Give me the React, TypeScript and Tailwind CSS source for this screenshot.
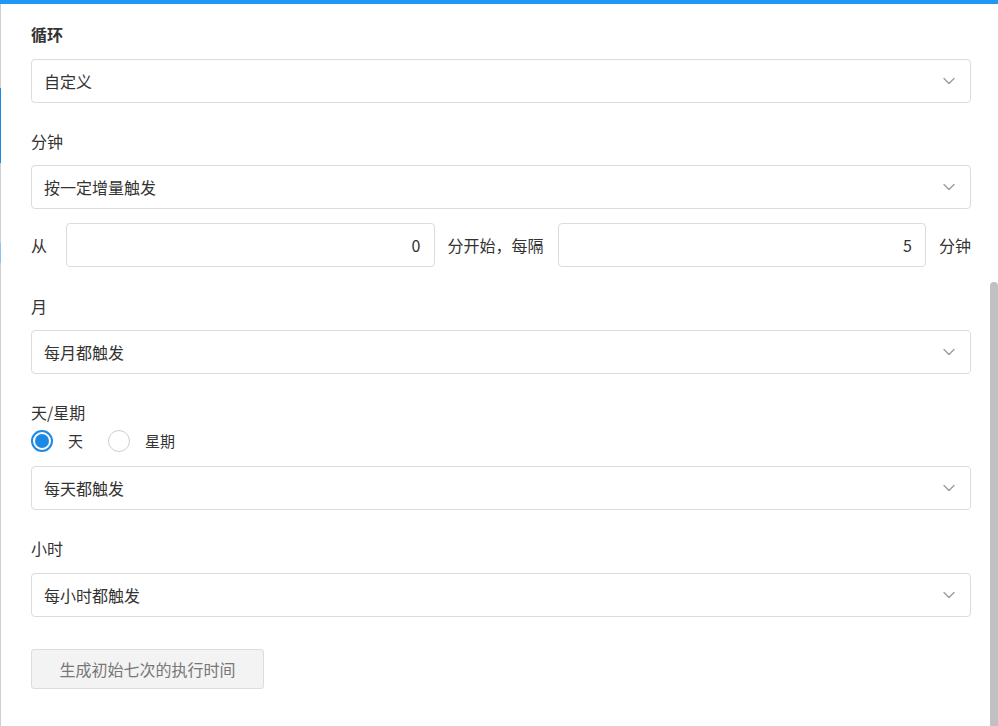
import React from "react";

const font = { fontFamily: '"Microsoft YaHei", "Noto Sans CJK SC", "Noto Sans", sans-serif' };

function Chevron(): React.ReactElement {
  return (
    <svg width="12" height="8" viewBox="0 0 12 8" fill="none" className="shrink-0">
      <path d="M1 1.5 L6 6.5 L11 1.5" stroke="#9a9a9a" strokeWidth="1.3" strokeLinecap="round" strokeLinejoin="round" />
    </svg>
  );
}

function Select({ value }: { value: string }): React.ReactElement {
  return (
    <div className="flex h-[44px] items-center justify-between rounded-[4px] border border-[#dcdcdc] bg-white pl-[12px] pr-[15px] text-[16px] text-[#333]">
      <span>{value}</span>
      <Chevron />
    </div>
  );
}

function Label({ children, bold }: { children: React.ReactNode; bold?: boolean }): React.ReactElement {
  return (
    <div className={`h-[24px] text-[16px] leading-[24px] text-[#333] ${bold ? "font-bold" : ""}`}>{children}</div>
  );
}

function NumberInput({ value }: { value: string }): React.ReactElement {
  return (
    <div className="flex h-[44px] min-w-0 flex-1 items-center justify-end rounded-[4px] border border-[#dcdcdc] bg-white pr-[13px] text-[16px] text-[#333]">
      {value}
    </div>
  );
}

function Radio({ checked, label }: { checked?: boolean; label: string }): React.ReactElement {
  return (
    <div className="flex items-center">
      {checked ? (
        <div className="flex h-[22px] w-[22px] items-center justify-center rounded-full border-2 border-[#1e88e5] bg-white">
          <div className="h-[14px] w-[14px] rounded-full bg-[#1e88e5]" />
        </div>
      ) : (
        <div className="h-[22px] w-[22px] rounded-full border border-[#cfcfcf] bg-white" />
      )}
      <span className="ml-[15px] text-[15px] text-[#333]">{label}</span>
    </div>
  );
}

export default function App(): React.ReactElement {
  return (
    <div className="flex h-[726px] w-[998px] flex-col overflow-hidden bg-white" style={font}>
      <div className="h-[4px] w-full bg-[#2196f3]" />
      <div className="flex flex-1">
        <div className="flex w-[1px] flex-col">
          <div className="h-[84px] bg-[#cfcfcf]" />
          <div className="h-[75px] bg-[#1e88e5]" />
          <div className="h-[80px] bg-[#cfcfcf]" />
          <div className="h-[20px] bg-[#8fc3ee]" />
          <div className="flex-1 bg-[#cfcfcf]" />
        </div>
        <div className="min-w-0 flex-1 pl-[30px] pr-[19px] pt-[18px]">
          <Label bold>循环</Label>
          <div className="mt-[13px]">
            <Select value="自定义" />
          </div>

          <div className="mt-[26px]">
            <Label>分钟</Label>
          </div>
          <div className="mt-[12px]">
            <Select value="按一定增量触发" />
          </div>
          <div className="mt-[14px] flex items-center text-[16px] text-[#333]">
            <span className="w-[35px] shrink-0 whitespace-nowrap">从</span>
            <NumberInput value="0" />
            <span className="w-[123px] shrink-0 whitespace-nowrap pl-[13px]">分开始，每隔</span>
            <NumberInput value="5" />
            <span className="w-[45px] shrink-0 whitespace-nowrap pl-[13px]">分钟</span>
          </div>

          <div className="mt-[27px]">
            <Label>月</Label>
          </div>
          <div className="mt-[12px]">
            <Select value="每月都触发" />
          </div>

          <div className="mt-[26px]">
            <Label>天/星期</Label>
          </div>
          <div className="mt-[6px] flex h-[22px] items-center gap-[25px]">
            <Radio checked label="天" />
            <Radio label="星期" />
          </div>
          <div className="mt-[14px]">
            <Select value="每天都触发" />
          </div>

          <div className="mt-[26px]">
            <Label>小时</Label>
          </div>
          <div className="mt-[13px]">
            <Select value="每小时都触发" />
          </div>

          <button className="mt-[32px] flex h-[40px] w-[233px] items-center justify-center rounded-[3px] border border-[#dcdcdc] bg-[#f3f3f3] text-[16px] text-[#777]">
            生成初始七次的执行时间
          </button>
        </div>
        <div className="flex w-[8px] flex-col">
          <div className="mt-[278px] flex-1 rounded-t-[4px] bg-[#c1c1c1]" />
        </div>
      </div>
    </div>
  );
}
